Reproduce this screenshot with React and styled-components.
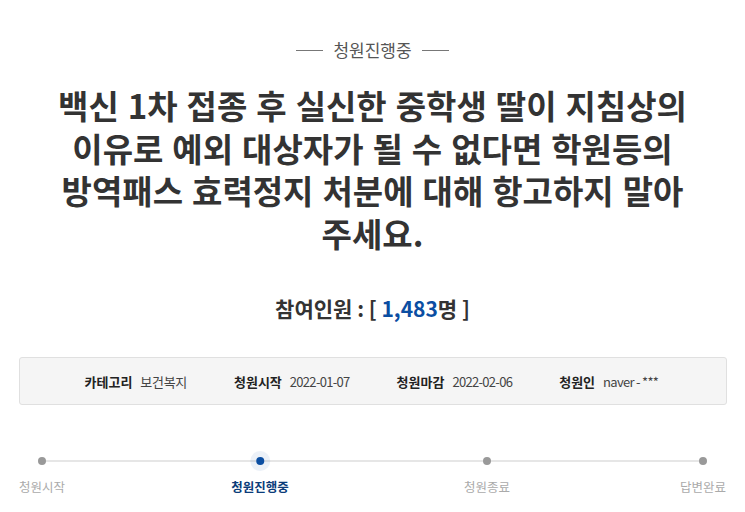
import React from "react";
import styled, { createGlobalStyle } from "styled-components";

const Global = createGlobalStyle`
  html, body { margin: 0; padding: 0; background: #fff; }
  body { font-family: "Noto Sans CJK KR", "Noto Sans", sans-serif; color: #333; }
`;

const Page = styled.div`
  width: 745px;
  height: 512px;
  overflow: hidden;
  display: flex;
  flex-direction: column;
  align-items: center;
`;

const Status = styled.div`
  margin-top: 38px;
  display: flex;
  align-items: center;
  gap: 10px;
  font-size: 17px;
  color: #555;
  line-height: 24px;
  &::before, &::after {
    content: "";
    width: 27px;
    height: 1px;
    background: #777;
  }
`;

const Title = styled.h1`
  margin: 22px 0 0;
  display: flex;
  flex-direction: column;
  align-items: center;
  font-size: 33px;
  font-weight: 700;
  word-spacing: 1.5px;
  color: #333;
  white-space: nowrap;
`;

const TitleLine = styled.span`
  display: block;
  height: 42.5px;
  line-height: 42.5px;
`;

const Count = styled.div`
  margin-top: 39px;
  font-size: 21px;
  font-weight: 700;
  color: #333;
  line-height: 30px;
`;

const Num = styled.span`
  color: #0b4ea2;
`;

const InfoBox = styled.div`
  margin-top: 34px;
  box-sizing: border-box;
  width: 708px;
  height: 48px;
  background: #f5f5f5;
  border: 1px solid #e0e0e0;
  border-radius: 3px;
  display: flex;
  align-items: center;
  padding-left: 65px;
  gap: 47px;
`;

const InfoItem = styled.div`
  display: flex;
  align-items: baseline;
  gap: 8px;
  font-size: 13px;
`;

const Label = styled.span`
  font-weight: 700;
  color: #222;
`;

const Value = styled.span`
  color: #444;
  letter-spacing: ${(p) => (p.tight ? "-0.7px" : "-0.3px")};
`;

const Progress = styled.div`
  margin-top: 46px;
  width: 745px;
  position: relative;
  height: 50px;
`;

const Track = styled.div`
  position: absolute;
  left: 42px;
  right: 42px;
  top: 9px;
  height: 2px;
  background: #e6e6e6;
`;

const Step = styled.div`
  position: absolute;
  left: ${(p) => p.x}px;
  top: 0;
  transform: translateX(-50%);
  display: flex;
  flex-direction: column;
  align-items: center;
`;

const Dot = styled.span`
  width: 20px;
  height: 20px;
  border-radius: 50%;
  display: flex;
  align-items: center;
  justify-content: center;
  background: ${(p) => (p.active ? "rgba(11,78,162,0.08)" : "transparent")};
  &::after {
    content: "";
    width: 8px;
    height: 8px;
    border-radius: 50%;
    background: ${(p) => (p.active ? "#0b4ea2" : "#999")};
  }
`;

const StepLabel = styled.span`
  margin-top: 6px;
  font-size: 12.5px;
  line-height: 20px;
  white-space: nowrap;
  color: ${(p) => (p.active ? "#0b3c7a" : "#aaa")};
  font-weight: ${(p) => (p.active ? 700 : 400)};
`;

const steps = [
  { x: 42, label: "청원시작" },
  { x: 260, label: "청원진행중", active: true },
  { x: 487, label: "청원종료" },
  { x: 703, label: "답변완료" },
];

const titleLines = [
  "백신 1차 접종 후 실신한 중학생 딸이 지침상의",
  "이유로 예외 대상자가 될 수 없다면 학원등의",
  "방역패스 효력정지 처분에 대해 항고하지 말아",
  "주세요.",
];

export default function App() {
  return (
    <Page>
      <Global />
      <Status>청원진행중</Status>
      <Title>
        {titleLines.map((l) => (
          <TitleLine key={l}>{l}</TitleLine>
        ))}
      </Title>
      <Count>
        참여인원 : [ <Num>1,483</Num>명 ]
      </Count>
      <InfoBox>
        <InfoItem>
          <Label>카테고리</Label>
          <Value>보건복지</Value>
        </InfoItem>
        <InfoItem>
          <Label>청원시작</Label>
          <Value tight>2022-01-07</Value>
        </InfoItem>
        <InfoItem>
          <Label>청원마감</Label>
          <Value tight>2022-02-06</Value>
        </InfoItem>
        <InfoItem>
          <Label>청원인</Label>
          <Value tight>naver - ***</Value>
        </InfoItem>
      </InfoBox>
      <Progress>
        <Track />
        {steps.map((s) => (
          <Step key={s.label} x={s.x}>
            <Dot active={s.active} />
            <StepLabel active={s.active}>{s.label}</StepLabel>
          </Step>
        ))}
      </Progress>
    </Page>
  );
}
